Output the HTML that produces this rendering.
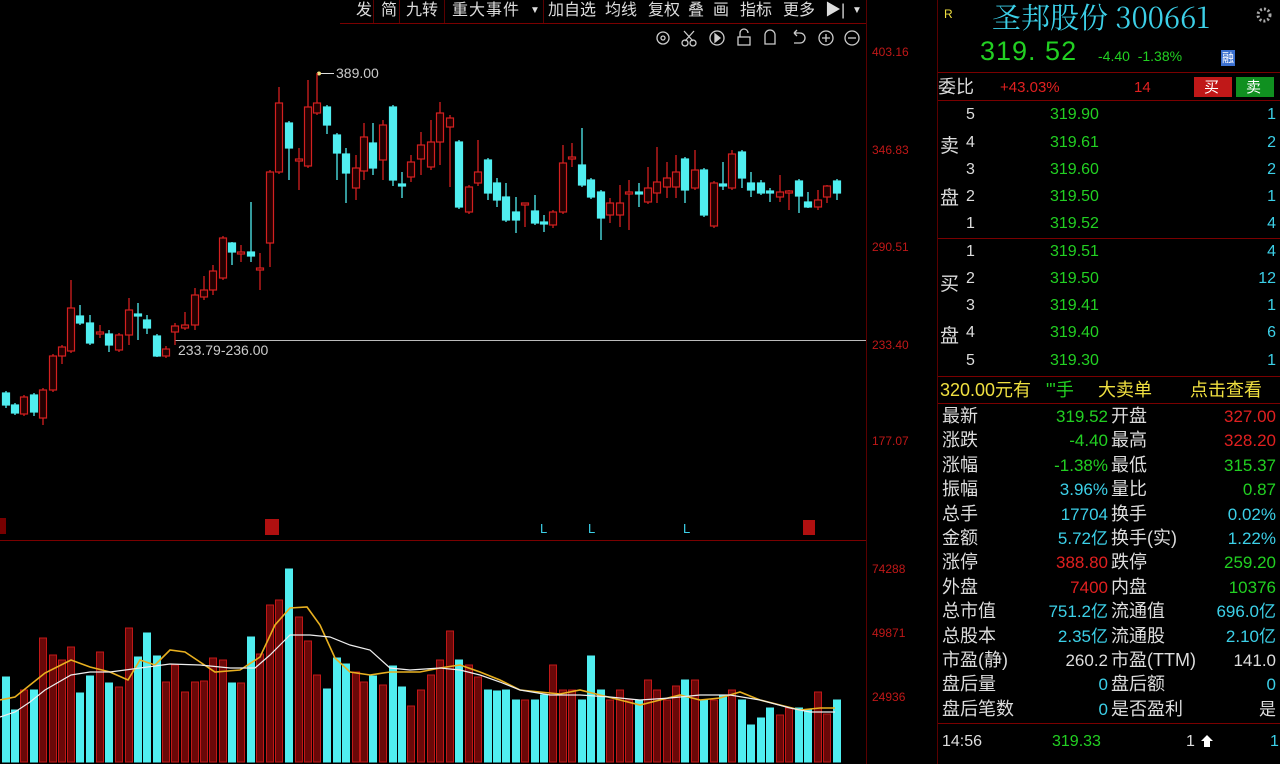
<!DOCTYPE html>
<html><head><meta charset="utf-8">
<style>
*{margin:0;padding:0;box-sizing:border-box}
body{width:1280px;height:764px;background:#000;overflow:hidden;position:relative;font-family:"Liberation Sans","Noto Sans CJK SC",sans-serif;color:#ddd}
.a{position:absolute;white-space:nowrap}
.tb{top:0;height:23px;font-size:16px;color:#ddd;line-height:22px}
.ax{color:#c01818;font-size:12px;left:872px}
.row{position:absolute;left:938px;width:342px;height:25px;font-size:18px;line-height:25px}
.g{color:#22d022}.r{color:#e02020}.c{color:#3cd0e8}.w{color:#ddd}.y{color:#f0e040}
</style></head><body>
<svg class="a" style="left:0;top:0" width="938" height="764">
<line x1="340" y1="23.5" x2="866" y2="23.5" stroke="#7a0000"/>
<g stroke="#5a0000"><line x1="373.5" y1="0" x2="373.5" y2="23"/><line x1="399.5" y1="0" x2="399.5" y2="23"/><line x1="444.5" y1="0" x2="444.5" y2="23"/><line x1="543.5" y1="0" x2="543.5" y2="23"/></g>
<line x1="866.5" y1="0" x2="866.5" y2="764" stroke="#5a0000"/>
<line x1="937.5" y1="0" x2="937.5" y2="764" stroke="#5a0000"/>
<line x1="0" y1="540.5" x2="866" y2="540.5" stroke="#7a0000"/>
<line x1="175" y1="340.5" x2="866" y2="340.5" stroke="#bbb"/>
<line x1="320" y1="73.5" x2="334" y2="73.5" stroke="#ddd"/>
<circle cx="319" cy="73.5" r="2" fill="#f0e080"/>
<g id="cand"></g><g id="vol"></g>
<polyline fill="none" stroke="#e8b020" stroke-width="1.6" points="0,700 15,697 30,685 45,673 71,660 90,667 110,672 128,680 140,660 155,665 170,650 185,652 200,662 215,672 240,670 260,657 275,625 290,608 307,607 320,625 335,658 350,672 370,675 390,672 420,672 440,668 460,665 480,672 500,680 520,690 540,692 560,694 580,690 600,695 620,700 640,705 660,700 680,695 700,700 720,698 740,692 760,700 780,705 800,710 820,708 835,708"/>
<polyline fill="none" stroke="#eee" stroke-width="1.2" points="0,717 15,712 30,702 45,690 71,675 90,672 110,672 140,668 170,664 200,665 230,668 255,668 270,655 290,635 310,635 330,637 350,645 370,650 390,668 410,670 440,668 460,670 480,675 500,682 520,690 550,695 580,695 610,697 640,700 670,698 700,695 730,695 760,700 790,708 810,712 835,712"/>
<rect x="265" y="519" width="14" height="16" fill="#b01010"/><rect x="803" y="520" width="12" height="15" fill="#b01010"/><rect x="0" y="518" width="6" height="16" fill="#700"/>
<g fill="none" stroke="#ccc" stroke-width="1.3">
<circle cx="663" cy="38" r="6"/><circle cx="663" cy="38" r="2"/>
<circle cx="685" cy="43" r="3"/><circle cx="693" cy="43" r="3"/><path d="M684 31 L693 41 M694 31 L685 41"/>
<circle cx="717" cy="38" r="7"/><path d="M715 34 L720 38 L715 42Z" fill="#ccc"/>
<rect x="738" y="37" width="12" height="8"/><path d="M740 37 V33 a4 4 0 0 1 8 0"/>
<path d="M765 44 V35 a5 5 0 0 1 10 0 V44 Z"/>
<path d="M794 33 H800 a5 5 0 0 1 0 10 H794 M794 33 l3 -3 M794 33 l3 3"/>
<circle cx="826" cy="38" r="7"/><path d="M822 38 H830 M826 34 V42"/>
<circle cx="852" cy="38" r="7"/><path d="M848 38 H856"/>
</g>
</svg>
<div class="a tb" style="left:356px">发</div>
<div class="a tb" style="left:381px">简</div>
<div class="a tb" style="left:406px">九转</div>
<div class="a tb" style="left:452px;letter-spacing:1px">重大事件</div>
<div class="a tb" style="left:530px;font-size:10px">▼</div>
<div class="a tb" style="left:548px">加自选</div>
<div class="a tb" style="left:605px">均线</div>
<div class="a tb" style="left:648px">复权</div>
<div class="a tb" style="left:688px">叠</div>
<div class="a tb" style="left:713px">画</div>
<div class="a tb" style="left:740px">指标</div>
<div class="a tb" style="left:783px">更多</div>
<div class="a tb" style="left:825px">▶|</div>
<div class="a tb" style="left:852px;font-size:10px">▼</div>
<div class="a" style="left:336px;top:65px;font-size:14px;color:#ccc">389.00</div>
<div class="a" style="left:178px;top:342px;font-size:14px;color:#ccc">233.79-236.00</div>
<div class="a ax" style="top:45px">403.16</div>
<div class="a ax" style="top:143px">346.83</div>
<div class="a ax" style="top:240px">290.51</div>
<div class="a ax" style="top:338px">233.40</div>
<div class="a ax" style="top:434px">177.07</div>
<div class="a ax" style="top:562px">74288</div>
<div class="a ax" style="top:626px">49871</div>
<div class="a ax" style="top:690px">24936</div>
<div class="a c" style="left:540px;top:521px;font-size:13px">L</div>
<div class="a c" style="left:588px;top:521px;font-size:13px">L</div>
<div class="a c" style="left:683px;top:521px;font-size:13px">L</div>

<svg class="a" style="left:938px;top:0" width="342" height="764">
<g stroke="#7a0000"><line x1="0" y1="72.5" x2="342" y2="72.5"/><line x1="0" y1="100.5" x2="342" y2="100.5"/><line x1="0" y1="238.5" x2="342" y2="238.5"/><line x1="0" y1="376.5" x2="342" y2="376.5"/><line x1="0" y1="403.5" x2="342" y2="403.5"/><line x1="0" y1="723.5" x2="342" y2="723.5"/></g>
<rect x="256" y="77" width="38" height="20" fill="#c01818"/><rect x="298" y="77" width="38" height="20" fill="#109020"/>
<rect x="283" y="50" width="14" height="16" fill="#3a70d0"/>
<circle cx="326" cy="15" r="6" fill="none" stroke="#aaa" stroke-width="3" stroke-dasharray="2 2"/>
<path d="M263 741 l6 -6 l6 6 h-3 v6 h-6 v-6z" fill="#fff"/>
</svg>
<div class="a y" style="left:944px;top:7px;font-size:12px">R</div>
<div class="a c" style="left:992px;top:-4px;font-size:29px;font-family:'Noto Serif CJK SC','Liberation Serif',serif">圣邦股份 300661</div>
<div class="a g" style="left:980px;top:36px;font-size:27px;letter-spacing:1px">319. 52</div>
<div class="a g" style="left:1098px;top:48px;font-size:14px">-4.40 &nbsp;-1.38%</div>
<div class="a" style="left:1222px;top:49px;font-size:12px;color:#fff">融</div>
<div class="row w" style="top:75px;"><span class="a" style="left:0">委比</span><span class="a r" style="left:62px;font-size:15px">+43.03%</span><span class="a r" style="left:196px;font-size:15px">14</span><span class="a" style="left:266px;color:#fff;font-size:15px">买</span><span class="a" style="left:308px;color:#fff;font-size:15px">卖</span></div>
<div id="book"></div>
<div class="row" style="top:378px"><span class="a y" style="left:2px">320.00元有</span><span class="a g" style="left:108px">"'手</span><span class="a y" style="left:160px">大卖单</span><span class="a y" style="left:252px">点击查看</span></div>
<div id="stats"></div>
<div class="row w" style="top:729px;font-size:16px"><span class="a" style="left:4px">14:56</span><span class="a g" style="left:114px">319.33</span><span class="a" style="left:248px">1</span><span class="a c" style="left:332px">1</span></div>
<script>
var C=[[6,393,405,391,408,'c'],[15,405,413,403,415,'c'],[24,397,414,395,416,'r'],[34,395,412,393,416,'c'],[43,390,418,388,425,'r'],[53,356,390,354,392,'r'],[62,347,356,345,364,'r'],[71,308,351,280,353,'r'],[80,316,323,305,325,'c'],[90,323,343,315,345,'c'],[100,332,334,325,338,'r'],[109,334,345,330,352,'c'],[119,335,350,333,352,'r'],[129,310,335,298,345,'r'],[138,314,316,303,340,'c'],[147,320,328,315,334,'c'],[157,336,356,334,357,'c'],[166,349,356,346,358,'r'],[175,326,332,323,345,'r'],[185,325,328,312,330,'r'],[195,295,325,288,330,'r'],[204,290,297,276,300,'r'],[213,271,290,265,295,'r'],[223,238,278,236,280,'r'],[232,243,252,242,265,'c'],[241,252,254,245,262,'r'],[251,252,256,202,262,'c'],[260,268,270,253,290,'r'],[270,172,243,170,267,'r'],[279,103,172,87,174,'r'],[289,123,148,121,180,'c'],[299,159,161,148,190,'r'],[308,107,166,80,168,'r'],[317,103,113,73,115,'r'],[327,107,125,105,134,'c'],[337,135,153,133,180,'c'],[346,154,173,148,203,'c'],[356,168,188,155,200,'r'],[364,137,171,123,180,'r'],[373,143,168,123,175,'c'],[383,125,160,120,180,'r'],[393,107,180,105,186,'c'],[402,184,186,172,198,'c'],[411,162,177,155,182,'r'],[421,145,159,132,175,'r'],[431,142,167,120,170,'r'],[440,113,142,102,165,'r'],[450,118,127,115,187,'r'],[459,142,207,140,209,'c'],[469,187,212,185,214,'r'],[478,172,183,140,186,'r'],[488,160,193,158,200,'c'],[497,183,200,178,207,'c'],[506,197,220,183,222,'c'],[516,212,220,197,233,'c'],[525,203,205,203,227,'r'],[535,211,223,195,225,'c'],[544,222,224,215,232,'c'],[553,212,225,210,228,'r'],[563,163,212,145,214,'r'],[572,157,159,143,167,'r'],[582,165,185,128,187,'c'],[591,180,197,178,199,'c'],[601,192,218,190,240,'c'],[610,203,215,198,223,'r'],[620,203,215,185,227,'r'],[629,192,194,180,230,'r'],[639,192,194,183,207,'c'],[648,188,202,167,204,'r'],[657,182,193,147,203,'r'],[667,178,187,162,198,'r'],[676,172,187,155,198,'r'],[685,159,190,157,203,'c'],[695,170,188,150,190,'r'],[704,170,215,168,217,'c'],[714,183,226,181,228,'r'],[723,184,186,162,190,'c'],[732,154,188,150,190,'r'],[742,152,178,150,188,'c'],[751,183,190,172,197,'c'],[761,183,193,180,195,'c'],[770,191,193,188,202,'c'],[780,192,197,175,202,'r'],[789,191,193,190,210,'r'],[799,181,196,179,213,'c'],[808,202,207,192,208,'c'],[818,200,207,190,210,'r'],[827,186,197,185,203,'r'],[837,181,193,179,200,'c']];
var V=[677,710,690,690,638,655,660,647,693,676,652,683,687,628,657,633,656,682,665,692,682,681,658,660,683,683,637,654,605,600,569,617,641,675,689,658,664,672,682,676,685,666,687,706,690,675,660,631,660,665,677,690,691,690,700,700,700,695,665,690,690,700,656,690,700,690,700,700,680,690,700,686,680,680,700,700,695,690,700,725,718,708,715,708,708,710,692,714];
var s='',v='';
C.forEach(function(d,i){var x=d[0],red=d[5]=='r',col=red?'#d42020':'#50eef0';
s+='<line x1="'+x+'" y1="'+d[3]+'" x2="'+x+'" y2="'+d[4]+'" stroke="'+col+'" stroke-width="1.3"/>';
var h=Math.max(2,d[2]-d[1]);
s+='<rect x="'+(x-3.5)+'" y="'+d[1]+'" width="7" height="'+h+'" fill="'+(red?'#200':col)+'" stroke="'+col+'" stroke-width="1.2"/>';
var t=V[i]||700;
v+='<rect x="'+(x-3.5)+'" y="'+t+'" width="7" height="'+(762-t)+'" fill="'+(red?'#6a0808':'#50eef0')+'" stroke="'+(red?'#c01818':'#50eef0')+'" stroke-width="1"/>';});
document.getElementById('cand').innerHTML=s;document.getElementById('vol').innerHTML=v;
var b='',P=['319.90','319.61','319.60','319.50','319.52','319.51','319.50','319.41','319.40','319.30'],Q=['1','2','2','1','4','4','12','1','6','1'],N=['5','4','3','2','1','1','2','3','4','5'];
var ys=[115,143,170,197,224,252,279,306,333,361];
for(var i=0;i<10;i++){b+='<div class="row" style="top:'+(ys[i]-13)+'px;font-size:16px"><span class="a w" style="left:28px">'+N[i]+'</span><span class="a g" style="left:112px">'+P[i]+'</span><span class="a c" style="right:4px">'+Q[i]+'</span></div>';}
b+='<div class="a w" style="left:940px;top:131px;font-size:19px">卖</div><div class="a w" style="left:940px;top:183px;font-size:19px">盘</div><div class="a w" style="left:940px;top:269px;font-size:19px">买</div><div class="a w" style="left:940px;top:321px;font-size:19px">盘</div>';
document.getElementById('book').innerHTML=b;
var S=[['最新','319.52','g','开盘','327.00','r'],['涨跌','-4.40','g','最高','328.20','r'],['涨幅','-1.38%','g','最低','315.37','g'],['振幅','3.96%','c','量比','0.87','g'],['总手','17704','c','换手','0.02%','c'],['金额','5.72亿','c','换手(实)','1.22%','c'],['涨停','388.80','r','跌停','259.20','g'],['外盘','7400','r','内盘','10376','g'],['总市值','751.2亿','c','流通值','696.0亿','c'],['总股本','2.35亿','c','流通股','2.10亿','c'],['市盈(静)','260.2','w','市盈(TTM)','141.0','w'],['盘后量','0','c','盘后额','0','c'],['盘后笔数','0','c','是否盈利','是','w']];
var t='';S.forEach(function(r,i){var y=404+i*24.4;t+='<div class="row" style="top:'+y+'px"><span class="a w" style="left:4px">'+r[0]+'</span><span class="a '+r[2]+'" style="right:172px;font-size:17px">'+r[1]+'</span><span class="a w" style="left:173px">'+r[3]+'</span><span class="a '+r[5]+'" style="right:4px;font-size:17px">'+r[4]+'</span></div>';});
document.getElementById('stats').innerHTML=t;
</script>
</body></html>
